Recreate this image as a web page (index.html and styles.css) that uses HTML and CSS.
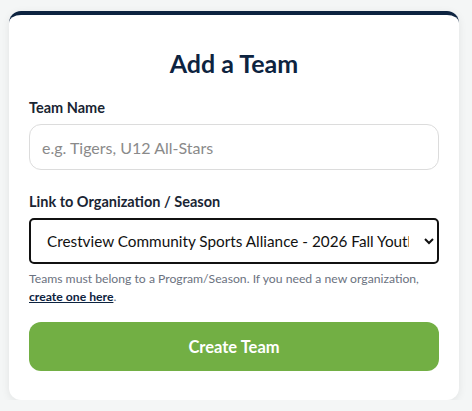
FILE: index.html
```html
<!DOCTYPE html>
<html lang="en">
<head>
    <meta charset="UTF-8">
    <meta name="viewport" content="width=device-width, initial-scale=1.0">
    <title>Add a Team</title>
    <link rel="stylesheet" href="styles.css">
</head>
<body>
    <div class="card">
        <h1>Add a Team</h1>
        <form class="team-form">
            <div class="field">
                <label for="teamName">Team Name</label>
                <input type="text" id="teamName" placeholder="e.g. Tigers, U12 All-Stars">
            </div>
            <div class="field">
                <label for="season">Link to Organization / Season</label>
                <select id="season">
                    <option>Crestview Community Sports Alliance - 2026 Fall Youth Tackle Football</option>
                </select>
                <p class="hint">Teams must belong to a Program/Season. If you need a new organization, <a href="#">create one here</a>.</p>
            </div>
            <button type="button" class="submit-btn">Create Team</button>
        </form>
    </div>
</body>
</html>
```

FILE: styles.css
```css
body {
    font-family: Lato, "Open Sans", sans-serif;
    background-color: #f4f6f6;
    margin: 0;
    padding: 11px 13px 0 9px;
}
.card {
    width: 410px;
    background: #fff;
    border-top: 4px solid #0d2340;
    border-radius: 12px;
    padding: 33px 20px 29px;
    box-shadow: 0 2px 8px rgba(0, 0, 0, 0.08);
}
h1 {
    margin: 0 0 21px;
    text-align: center;
    font-size: 25px;
    line-height: 30px;
    font-weight: 700;
    color: #0d2340;
}
.team-form {
    display: flex;
    flex-direction: column;
}
.field {
    display: flex;
    flex-direction: column;
    margin-bottom: 23px;
}
.field:nth-child(2) {
    margin-bottom: 16px;
}
.field label {
    font-size: 14.5px;
    font-weight: 700;
    color: #1a2533;
    margin-bottom: 8px;
}
input[type="text"] {
    height: 46px;
    box-sizing: border-box;
    padding: 0 12px;
    font-family: inherit;
    font-size: 16px;
    border: 1px solid #dcdcdc;
    border-radius: 12px;
    outline: none;
}
input::placeholder {
    color: #8a8a8a;
}
select {
    height: 46px;
    box-sizing: border-box;
    padding: 0 12px;
    font-family: inherit;
    font-size: 15.3px;
    color: #111;
    background: #fff;
    border: 2px solid #111;
    border-radius: 5px;
}
.hint {
    margin: 6px 0 0;
    font-size: 12.2px;
    line-height: 18px;
    color: #6b7280;
}
.hint a {
    color: #0d2340;
    font-weight: 700;
}
.submit-btn {
    height: 49px;
    background-color: #72af44;
    color: #fff;
    border: none;
    border-radius: 12px;
    font-family: inherit;
    font-size: 16.5px;
    font-weight: 700;
    cursor: pointer;
}
```
